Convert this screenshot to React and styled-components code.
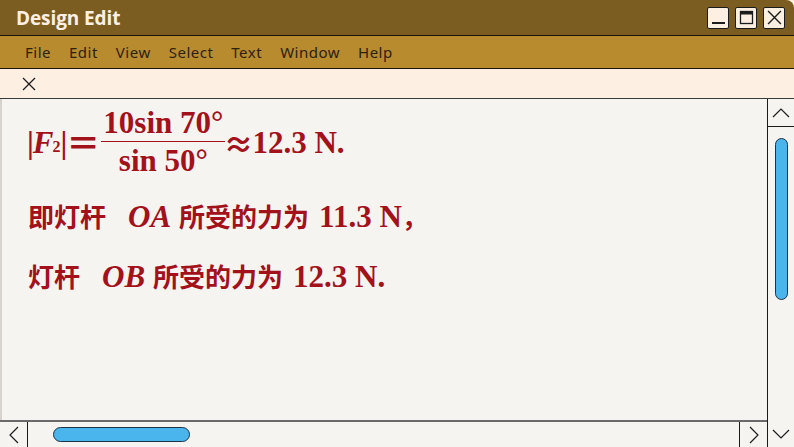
import React from "react";
import styled, { createGlobalStyle } from "styled-components";

const GlobalStyle = createGlobalStyle`
  html, body {
    margin: 0;
    padding: 0;
  }
  body {
    width: 794px;
    height: 447px;
    overflow: hidden;
    background: #fdf0e2;
  }
`;

const menuItems = ["File", "Edit", "View", "Select", "Text", "Window", "Help"];

const Chevron = ({ dir }) => {
  const points = {
    up: "2,11 10,3 18,11",
    down: "2,3 10,11 18,3",
    left: "11,2 3,10 11,18",
    right: "3,2 11,10 3,18",
  }[dir];
  const vertical = dir === "up" || dir === "down";
  return (
    <svg
      width={vertical ? 20 : 14}
      height={vertical ? 14 : 20}
      viewBox={vertical ? "0 0 20 14" : "0 0 14 20"}
    >
      <polyline points={points} fill="none" stroke="#1d1d1d" strokeWidth="1.2" />
    </svg>
  );
};

const CrossIcon = ({ size = 14 }) => (
  <svg width={size} height={size} viewBox="0 0 14 14">
    <path d="M1 1 L13 13 M13 1 L1 13" stroke="#1d1d1d" strokeWidth="1.3" />
  </svg>
);

const App = () => {
  return (
    <>
      <GlobalStyle />
      <Window>
        <TitleBar>
          <Title>Design Edit</Title>
          <WinButtons>
            <WinButton>
              <svg width="15" height="15" viewBox="0 0 15 15">
                <path d="M1 13 H14" stroke="#1d1d1d" strokeWidth="2" />
              </svg>
            </WinButton>
            <WinButton>
              <svg width="15" height="15" viewBox="0 0 15 15">
                <rect x="1.5" y="1.5" width="12" height="12" fill="none" stroke="#1d1d1d" strokeWidth="1.3" />
                <path d="M1.5 3 H13.5" stroke="#1d1d1d" strokeWidth="3" />
              </svg>
            </WinButton>
            <WinButton>
              <CrossIcon size={15} />
            </WinButton>
          </WinButtons>
        </TitleBar>

        <MenuBar>
          {menuItems.map((m) => (
            <MenuItem key={m}>{m}</MenuItem>
          ))}
        </MenuBar>

        <TabStrip>
          <CrossIcon />
        </TabStrip>

        <Main>
          <LeftCol>
            <Content>
              <FormulaLine>
                <Bar>|</Bar>
                <Italic>F</Italic>
                <Sub>2</Sub>
                <Bar>|</Bar>
                <Equals>＝</Equals>
                <Fraction>
                  <Numer>10sin 70°</Numer>
                  <Denom>sin 50°</Denom>
                </Fraction>
                <Approx>≈</Approx>
                <span>12.3 N.</span>
              </FormulaLine>
              <TextLine $top={20}>
                <Cjk>即灯杆</Cjk>
                <Var>OA</Var>
                <Cjk>所受的力为</Cjk>
                <Num>11.3 N</Num>
                <Cjk>，</Cjk>
              </TextLine>
              <TextLine $top={19}>
                <Cjk>灯杆</Cjk>
                <Var>OB</Var>
                <Cjk>所受的力为</Cjk>
                <Num>12.3 N.</Num>
              </TextLine>
            </Content>
            <HScroll>
              <ScrollButton $side="right">
                <Chevron dir="left" />
              </ScrollButton>
              <HTrack>
                <HThumb />
              </HTrack>
              <ScrollButton $side="left">
                <Chevron dir="right" />
              </ScrollButton>
            </HScroll>
          </LeftCol>
          <VScroll>
            <VButton $border>
              <Chevron dir="up" />
            </VButton>
            <VTrack>
              <VThumb />
            </VTrack>
            <VButton>
              <Chevron dir="down" />
            </VButton>
          </VScroll>
        </Main>
      </Window>
    </>
  );
};

export default App;

const Window = styled.div`
  width: 794px;
  height: 447px;
  display: flex;
  flex-direction: column;
  overflow: hidden;
`;

const TitleBar = styled.div`
  height: 35px;
  flex-shrink: 0;
  background: #7b5d22;
  border-bottom: 1px solid #1b140a;
  border-top-right-radius: 8px;
  display: flex;
  align-items: center;
  justify-content: space-between;
  padding: 0 9px 0 16px;
`;

const Title = styled.div`
  font-family: "Open Sans", "Liberation Sans", sans-serif;
  font-weight: 700;
  font-size: 19px;
  color: #fdf0e2;
  letter-spacing: -0.1px;
`;

const WinButtons = styled.div`
  display: flex;
  gap: 6px;
`;

const WinButton = styled.div`
  width: 20px;
  height: 20px;
  background: #fdf0e2;
  border: 1px solid #1b1b1b;
  border-radius: 2px;
  display: flex;
  align-items: center;
  justify-content: center;
`;

const MenuBar = styled.div`
  height: 32px;
  flex-shrink: 0;
  background: #b88b2e;
  border-bottom: 1px solid #1b140a;
  display: flex;
  align-items: center;
  gap: 18px;
  padding-left: 25px;
`;

const MenuItem = styled.span`
  font-family: "Noto Sans", "Liberation Sans", sans-serif;
  font-size: 15px;
  letter-spacing: 0.5px;
  color: #2c2110;
`;

const TabStrip = styled.div`
  height: 29px;
  flex-shrink: 0;
  background: #fdf0e2;
  border-bottom: 1px solid #3a3a3a;
  display: flex;
  align-items: center;
  padding-left: 22px;
`;

const Main = styled.div`
  flex: 1;
  display: flex;
  min-height: 0;
  background: #f6f4f1;
`;

const LeftCol = styled.div`
  flex: 1;
  display: flex;
  flex-direction: column;
`;

const Content = styled.div`
  flex: 1;
  border-left: 2px solid #d6d2cc;
  padding: 9px 0 0 26px;
  color: #a3111b;
  font-family: "Liberation Serif", "Noto Sans CJK SC", serif;
  font-weight: 700;
`;

const FormulaLine = styled.div`
  display: flex;
  align-items: center;
  font-size: 31px;
  line-height: 1;
`;

const Bar = styled.span`
  margin: 0 -1px;
`;

const Italic = styled.i`
  font-style: italic;
  letter-spacing: -1px;
`;

const Sub = styled.sub`
  font-size: 16px;
  vertical-align: baseline;
  margin: 10px 1px 0 0;
`;

const Equals = styled.span`
  font-family: "Noto Sans CJK SC", sans-serif;
  font-size: 34px;
  margin: 0 1px 0 0;
`;

const Fraction = styled.span`
  display: inline-flex;
  flex-direction: column;
  align-items: center;
`;

const Numer = styled.span`
  padding: 0 2px 3px;
  border-bottom: 1px solid #a3111b;
  line-height: 30px;
`;

const Denom = styled.span`
  padding-top: 3px;
  line-height: 31px;
`;

const Approx = styled.span`
  font-family: "Noto Sans CJK SC", sans-serif;
  font-size: 30px;
  margin: 0 -1px 0 -2px;
`;

const TextLine = styled.div`
  margin-top: ${(p) => p.$top}px;
  display: flex;
  align-items: baseline;
  line-height: 40px;
  white-space: pre;
`;

const Cjk = styled.span`
  font-family: "Noto Sans CJK SC", sans-serif;
  font-size: 26px;
`;

const Var = styled.i`
  font-size: 31px;
  font-style: italic;
  margin: 0 8px 0 22px;
`;

const Num = styled.span`
  font-size: 31px;
  margin-left: 10px;
`;

const HScroll = styled.div`
  height: 25px;
  flex-shrink: 0;
  border-top: 2px solid #6a6a6a;
  display: flex;
`;

const ScrollButton = styled.div`
  width: 27px;
  display: flex;
  align-items: center;
  justify-content: center;
  border-${(p) => p.$side}: 1px solid #1b1b1b;
`;

const HTrack = styled.div`
  flex: 1;
  display: flex;
  align-items: center;
`;

const HThumb = styled.div`
  width: 135px;
  height: 13px;
  margin-left: 25px;
  background: #4ab4ec;
  border: 1px solid #1c3347;
  border-radius: 8px;
`;

const VScroll = styled.div`
  width: 26px;
  border-left: 1px solid #1b1b1b;
  display: flex;
  flex-direction: column;
`;

const VButton = styled.div`
  height: 27px;
  flex-shrink: 0;
  display: flex;
  align-items: center;
  justify-content: center;
  border-bottom: ${(p) => (p.$border ? "1px solid #1b1b1b" : "none")};
`;

const VTrack = styled.div`
  flex: 1;
  display: flex;
  justify-content: center;
`;

const VThumb = styled.div`
  width: 11px;
  height: 160px;
  margin-top: 11px;
  background: #4ab4ec;
  border: 1px solid #1c3347;
  border-radius: 8px;
`;
